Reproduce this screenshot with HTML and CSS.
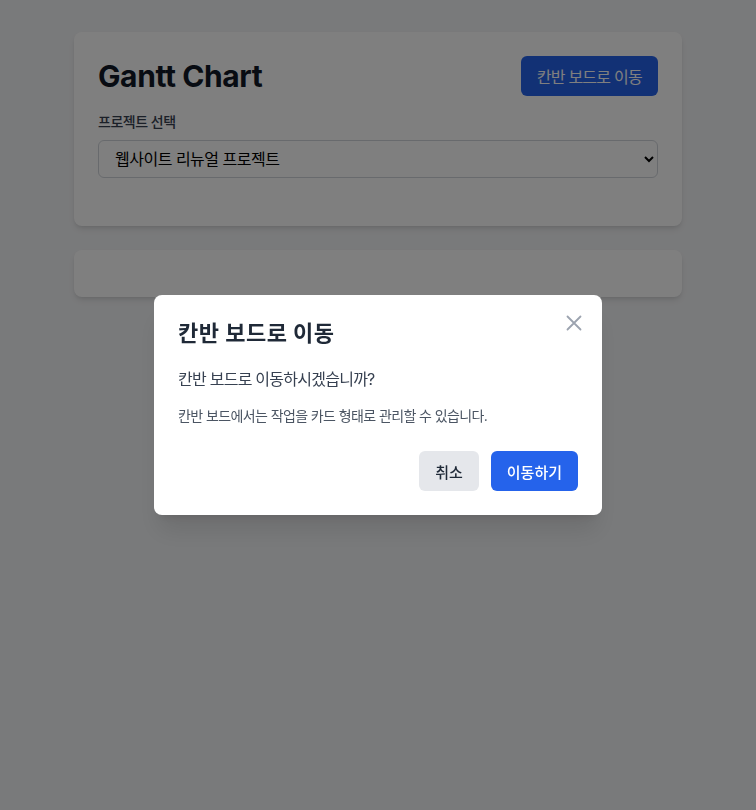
FILE: index.html
```html
<!DOCTYPE html>
<html lang="ko">
<head>
<meta charset="utf-8">
<title>Gantt Chart</title>
<link rel="stylesheet" href="styles.css">
</head>
<body>
<div class="page">
  <div class="card">
    <div class="card-header">
      <h1 class="title">Gantt Chart</h1>
      <button class="btn btn-primary">칸반 보드로 이동</button>
    </div>
    <div class="field">
      <label class="label" for="project">프로젝트 선택</label>
      <select class="select" id="project">
        <option>웹사이트 리뉴얼 프로젝트</option>
      </select>
    </div>
  </div>
  <div class="card card-empty"></div>
</div>

<div class="overlay">
  <div class="modal">
    <button class="close" aria-label="닫기">
      <svg width="24" height="24" viewBox="0 0 24 24" fill="none" stroke="currentColor" stroke-width="1.8" stroke-linecap="round"><path d="M5.5 5.5l13 13M18.5 5.5l-13 13"/></svg>
    </button>
    <h2 class="modal-title">칸반 보드로 이동</h2>
    <p class="modal-text">칸반 보드로 이동하시겠습니까?</p>
    <p class="modal-sub">칸반 보드에서는 작업을 카드 형태로 관리할 수 있습니다.</p>
    <div class="modal-actions">
      <button class="btn btn-secondary">취소</button>
      <button class="btn btn-primary">이동하기</button>
    </div>
  </div>
</div>
</body>
</html>
```

FILE: styles.css
```css
* { box-sizing: border-box; }
html, body { margin: 0; padding: 0; }
body {
  background: #f3f4f6;
  font-family: Inter, "Noto Sans CJK KR", sans-serif;
  color: #111827;
  min-height: 810px;
}
.page {
  width: 608px;
  margin: 0 auto;
  padding-top: 32px;
  display: flex;
  flex-direction: column;
  gap: 24px;
}
.card {
  background: #fff;
  border-radius: 8px;
  box-shadow: 0 4px 6px -1px rgba(0,0,0,.1), 0 2px 4px -2px rgba(0,0,0,.1);
  padding: 24px;
}
.card-empty { height: 47px; padding: 0; }
.card-header {
  display: flex;
  justify-content: space-between;
  align-items: center;
  margin-bottom: 16px;
}
.title {
  margin: 0;
  font-size: 30px;
  line-height: 36px;
  font-weight: 700;
  letter-spacing: -0.4px;
  color: #111827;
}
.field { margin-bottom: 24px; }
.label {
  display: block;
  font-size: 14px;
  line-height: 20px;
  font-weight: 500;
  letter-spacing: -0.5px;
  color: #374151;
  margin-bottom: 8px;
}
.select {
  display: block;
  width: 100%;
  height: 38px;
  padding: 0 8px 0 12px;
  border: 1px solid #d1d5db;
  border-radius: 6px;
  background: #fff;
  font-family: Inter, "Noto Sans CJK KR", sans-serif;
  font-size: 16px;
  letter-spacing: -0.5px;
  color: #000;
}
.btn {
  border: none;
  border-radius: 6px;
  height: 40px;
  padding: 0 16px;
  font-family: Inter, "Noto Sans CJK KR", sans-serif;
  font-size: 16px;
  font-weight: 500;
  cursor: pointer;
}
.card-header .btn { letter-spacing: -0.75px; font-weight: 400; }
.btn-primary { background: #2563eb; color: #fff; }
.btn-secondary { background: #e5e7eb; color: #1f2937; }
.overlay {
  position: fixed;
  inset: 0;
  background: rgba(0,0,0,.5);
  display: flex;
  align-items: center;
  justify-content: center;
}
.modal {
  position: relative;
  width: 448px;
  background: #fff;
  border-radius: 8px;
  padding: 24px;
  box-shadow: 0 20px 25px -5px rgba(0,0,0,.1), 0 8px 10px -6px rgba(0,0,0,.1);
}
.close {
  position: absolute;
  top: 16px;
  right: 16px;
  width: 24px;
  height: 24px;
  padding: 0;
  border: none;
  background: none;
  color: #9ca3af;
  display: flex;
}
.modal-title {
  margin: 0 0 20px;
  font-size: 22px;
  line-height: 28px;
  font-weight: 700;
  letter-spacing: 0.5px;
  color: #1f2937;
}
.modal-text {
  margin: 0 0 15px;
  font-size: 16px;
  line-height: 24px;
  letter-spacing: -0.75px;
  color: #374151;
}
.modal-sub {
  margin: 0 0 25px;
  font-size: 14px;
  line-height: 20px;
  letter-spacing: -0.6px;
  color: #4b5563;
}
.modal-actions {
  display: flex;
  justify-content: flex-end;
  gap: 12px;
}
.modal-actions .btn { font-size: 15px; }
```
